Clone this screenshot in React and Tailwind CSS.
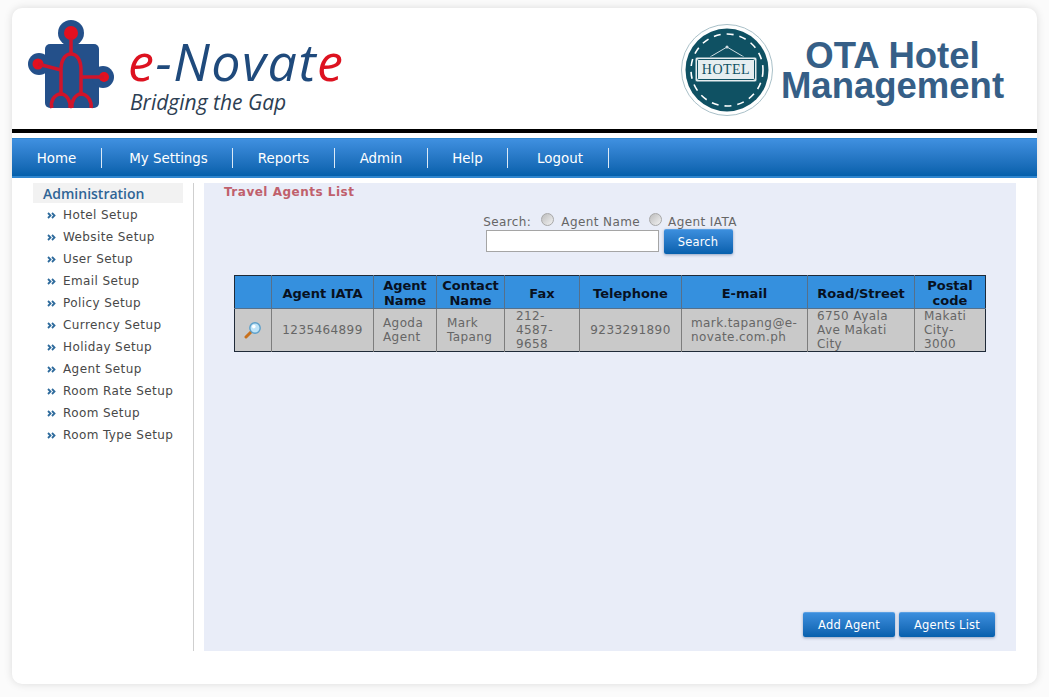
const NAV_ITEMS = [
  ['Home', 'w-[90px]'],
  ['My Settings', 'w-[131px] pl-[3px]'],
  ['Reports', 'w-[102px]'],
  ['Admin', 'w-[93px]'],
  ['Help', 'w-[80px]'],
  ['Logout', 'w-[101px] pl-[4px]'],
];

const SIDE_ITEMS = [
  'Hotel Setup',
  'Website Setup',
  'User Setup',
  'Email Setup',
  'Policy Setup',
  'Currency Setup',
  'Holiday Setup',
  'Agent Setup',
  'Room Rate Setup',
  'Room Setup',
  'Room Type Setup',
];

const COLUMNS = [
  ['', 'w-[37px]'],
  ['Agent IATA', 'w-[102px]'],
  ['Agent Name', 'w-[63px]'],
  ['Contact Name', 'w-[68px]'],
  ['Fax', 'w-[75px]'],
  ['Telephone', 'w-[102px]'],
  ['E-mail', 'w-[126px]'],
  ['Road/Street', 'w-[107px]'],
  ['Postal code', 'w-[71px]'],
];

const ROW = [
  ['1235464899', 'text-center'],
  ['Agoda Agent', 'pl-[9px]'],
  ['Mark Tapang', 'pl-[10px]'],
  ['212-4587-9658', 'pl-[11px]'],
  ['9233291890', 'text-center'],
  ['mark.tapang@e-novate.com.ph', 'pl-[9px]'],
  ['6750 Ayala Ave Makati City', 'pl-[9px]'],
  ['Makati City-3000', 'pl-[9px]'],
];

function PuzzleLogo() {
  return (
    <svg width="88" height="92" viewBox="0 0 88 92" className="shrink-0">
      <rect x="17" y="24" width="54" height="64" rx="5" fill="#24508a" />
      <circle cx="43" cy="13" r="13" fill="#24508a" />
      <circle cx="11" cy="44" r="11" fill="#24508a" />
      <circle cx="75" cy="57" r="11" fill="#24508a" />
      <circle cx="43" cy="13" r="7" fill="#e3101f" />
      <circle cx="10" cy="44" r="5.5" fill="#e3101f" />
      <circle cx="76" cy="57" r="5" fill="#e3101f" />
      <g fill="none" stroke="#d0142a" strokeWidth="3.5">
        <path d="M43 18V34" />
        <path d="M33 76V50C33 40 37 34 43 34C49 34 53 40 53 50V76" />
        <path d="M10 44L33 50" />
        <path d="M53 57H76" />
        <path d="M33 74C26 74 22 82 24 88" />
        <path d="M33 74C39 74 43 82 42 88" />
        <path d="M44 88C43 82 47 74 53 74C60 74 64 82 63 88" />
      </g>
    </svg>
  );
}

function HotelBadge() {
  return (
    <svg width="92" height="92" viewBox="0 0 92 92" className="shrink-0">
      <circle cx="46" cy="46" r="45.5" fill="#fff" stroke="#a9c0c8" />
      <circle cx="46" cy="46" r="41.5" fill="#0f5163" />
      <circle cx="46" cy="46" r="36" fill="none" stroke="#fff" strokeWidth="1.6" strokeDasharray="7 6" />
      <path d="M29 33L46 23L63 33" fill="none" stroke="#cfdde2" strokeWidth="1" />
      <circle cx="46" cy="23" r="1.5" fill="#cfdde2" />
      <rect x="14" y="33" width="62" height="25" rx="2" fill="#e6eef0" stroke="#0f5163" />
      <rect x="16.5" y="35.5" width="57" height="20" rx="1" fill="none" stroke="#0f5163" />
      <text x="45" y="50" textAnchor="middle" fontFamily="'Liberation Serif', serif" fontSize="14" letterSpacing="0.5" fill="#0f5163">
        HOTEL
      </text>
    </svg>
  );
}

function Magnifier() {
  return (
    <svg width="18" height="18" viewBox="0 0 18 18" className="mx-auto block">
      <path d="M2 16L7 11" stroke="#c8701c" strokeWidth="3" strokeLinecap="round" />
      <circle cx="11" cy="7" r="5.2" fill="#bfe3f7" stroke="#5c9fc9" strokeWidth="1.4" />
      <circle cx="9.8" cy="5.6" r="1.8" fill="#fff" />
    </svg>
  );
}

function Bullet() {
  return (
    <svg width="9" height="7" viewBox="0 0 9 7" className="shrink-0">
      <path d="M1 1L3.5 3.5L1 6M5 1L7.5 3.5L5 6" fill="none" stroke="#2d6a9c" strokeWidth="1.8" />
    </svg>
  );
}

function Radio() {
  return <span className="inline-block size-[13px] rounded-full border border-[#a8a8a8] bg-gradient-to-br from-[#bdbdbd] to-[#f2f2f2]" />;
}

function BlueButton({ children, className }) {
  return (
    <button className={`h-[25px] rounded-[2px] border-t border-[#5aa0e4] bg-gradient-to-b from-[#3b8edd] to-[#0560ad] pt-[2px] text-center text-[11.5px] tracking-[0.2px] text-white shadow-[0_1px_3px_rgba(60,90,140,0.5)] ${className}`}>
      {children}
    </button>
  );
}

export default function App() {
  return (
    <div className="h-[697px] w-[1049px] overflow-hidden bg-[#fbfbfb] pt-2 pl-3 font-['DejaVu_Sans',sans-serif]">
      <div className="h-[676px] w-[1025px] rounded-[10px] bg-white shadow-[0_0_8px_rgba(0,0,0,0.13)]">
        <header className="flex h-[121px] items-start justify-between">
          <div className="flex pt-[12px] pl-[16px]">
            <PuzzleLogo />
            <div className="pl-[12px] font-['Open_Sans',sans-serif] italic">
              <div className="mt-[16px] h-[50px] text-[52px] leading-[50px] font-medium tracking-[1.5px] text-[#1f4a7c]">
                <span className="text-[#dd1220]">e</span>-Novat<span className="text-[#dd1220]">e</span>
              </div>
              <div className="mt-[3px] pl-[2px] text-[21px] leading-[26px] text-[#2c3e52]">Bridging the Gap</div>
            </div>
          </div>
          <div className="flex pt-[16px] pr-[25px]">
            <HotelBadge />
            <h1 className="w-[239px] pt-[17px] text-center font-['Liberation_Sans',sans-serif] text-[36.5px] leading-[30px] font-bold text-[#365f87]">
              OTA Hotel Management
            </h1>
          </div>
        </header>

        <div className="h-1 bg-black" />
        <nav className="mt-[5px] flex h-[40px] items-center border-t border-b-2 border-[#2f86cf] bg-gradient-to-b from-[#3f90e0] to-[#0460ab]">
          {NAV_ITEMS.map(([label, width]) => (
            <div key={label} className={`flex h-[20px] items-center justify-center border-r border-[#dceaf7] pt-[3px] text-[13.4px] text-white ${width}`}>
              {label}
            </div>
          ))}
        </nav>

        <div className="mt-[5px] flex">
          <aside className="ml-[21px] h-[468px] w-[161px] border-r border-[#cfcfcf]">
            <div className="h-[20px] w-[150px] bg-[#f2f2f2] pl-[10px] font-['Open_Sans',sans-serif] text-[14px] leading-[21px] font-semibold text-[#2f6496]">
              Administration
            </div>
            <ul className="pt-[1px]">
              {SIDE_ITEMS.map((item) => (
                <li key={item} className="flex h-[22px] items-center gap-[7px] pl-[14px] text-[12px] tracking-[0.4px] text-[#484848]">
                  <Bullet />
                  {item}
                </li>
              ))}
            </ul>
          </aside>

          <main className="ml-[10px] flex h-[468px] w-[812px] flex-col bg-[#e9edf8]">
            <h2 className="pt-[2px] pl-[20px] text-[12px] leading-[15px] font-bold tracking-[0.5px] text-[#c0606c]">Travel Agents List</h2>

            <div className="mt-[14px] flex flex-col items-center text-[12px] tracking-[0.4px] text-[#666666]">
              <div className="flex h-[16px] items-center">
                <span>Search:</span>
                <span className="ml-[10px]"><Radio /></span>
                <span className="ml-[7px]">Agent Name</span>
                <span className="ml-[9px]"><Radio /></span>
                <span className="ml-[6px]">Agent IATA</span>
              </div>
              <div className="mt-[-1px] mr-[2px] flex gap-[5px]">
                <input className="mt-[1px] h-[22px] w-[173px] border border-[#a5a5a5] bg-white" />
                <BlueButton className="w-[69px]">Search</BlueButton>
              </div>
            </div>

            <table className="mt-[21px] ml-[30px] w-[751px] table-fixed border-collapse border border-[#1f2a38] text-[12px]">
              <thead>
                <tr className="h-[33px] bg-[#3590de]">
                  {COLUMNS.map(([label, width]) => (
                    <th key={label || 'icon'} className={`border-r border-b border-[#56708a] px-[2px] pt-[2px] text-center text-[13px] leading-[15px] font-bold text-[#08111f] last:border-r-0 ${width}`}>
                      {label}
                    </th>
                  ))}
                </tr>
              </thead>
              <tbody>
                <tr className="h-[43px] bg-[#c9c9c9] text-[#666666]">
                  <td className="border-r border-[#7d7d7d]"><Magnifier /></td>
                  {ROW.map(([value, align]) => (
                    <td key={value} className={`border-r border-[#7d7d7d] text-[12px] leading-[14px] tracking-[0.4px] break-words last:border-r-0 ${align}`}>
                      {value}
                    </td>
                  ))}
                </tr>
              </tbody>
            </table>

            <div className="mt-auto flex justify-end gap-[4px] pr-[21px] pb-[14px]">
              <BlueButton className="w-[92px]">Add Agent</BlueButton>
              <BlueButton className="w-[96px]">Agents List</BlueButton>
            </div>
          </main>
        </div>
      </div>
    </div>
  );
}
